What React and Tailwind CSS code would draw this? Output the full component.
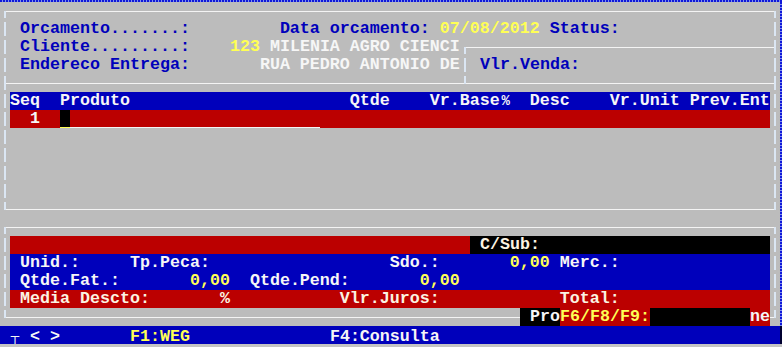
import React from "react";

const LINE_H = "#f4f4f4";
const LINE_V = "#dbe6f3";

function Box({ u, d, l, r }) {
  return (
    <svg width="10" height="18" className="block shrink-0">
      {l && <rect x="0" y="9" width="5" height="1" fill={LINE_H} />}
      {r && <rect x="4" y="9" width="6" height="1" fill={LINE_H} />}
      {u && <rect x="4" y="2" width="2" height="8" fill={LINE_V} />}
      {d && <rect x="4" y="9" width="2" height="7" fill={LINE_V} />}
    </svg>
  );
}

function HLine({ className }) {
  return (
    <div className={`${className} h-[18px] pt-[9px] shrink-0`}>
      <div className="h-px bg-[#f4f4f4]" />
    </div>
  );
}

function Row({ children }) {
  return <div className="flex h-[18px] leading-[18px]">{children}</div>;
}

const B = ({ children }) => <span className="whitespace-pre text-[#0000bb]">{children}</span>;
const Y = ({ children }) => <span className="whitespace-pre text-[#ffff55]">{children}</span>;
const W = ({ children }) => <span className="whitespace-pre text-[#f6f6f6]">{children}</span>;
const C = ({ children }) => <span className="whitespace-pre text-[#fbf3e2]">{children}</span>;

export default function App() {
  return (
    <div className="w-[782px] h-[347px] overflow-hidden bg-[#bcbcbc] font-[family-name:Liberation_Mono,monospace] text-[16.664px] font-bold flex flex-col">
      {/* top dotted strip */}
      <div className="h-[2px] bg-[repeating-linear-gradient(90deg,#1018d8_0px,#1018d8_2px,#8090f0_2px,#8090f0_3px)]" />

      <div className="flex">
        <div className="w-[780px] flex flex-col">
          {/* row 0 */}
          <Row>
            <Box d r />
            <HLine className="w-[760px]" />
            <Box d l />
          </Row>
          {/* row 1 */}
          <Row>
            <Box u d />
            <div className="w-[760px] flex">
              <B>{" Orcamento.......:         Data orcamento: "}</B>
              <Y>07/08/2012</Y>
              <B>{" Status:"}</B>
            </div>
            <Box u d />
          </Row>
          {/* row 2 */}
          <Row>
            <Box u d />
            <div className="w-[450px] flex shrink-0">
              <B>{" Cliente.........:    "}</B>
              <Y>123</Y>
              <W>{" MILENIA AGRO CIENCI"}</W>
            </div>
            <Box d r />
            <HLine className="w-[300px]" />
            <Box u d l />
          </Row>
          {/* row 3 */}
          <Row>
            <Box u d />
            <div className="w-[450px] flex shrink-0">
              <B>{" Endereco Entrega:       "}</B>
              <W>RUA PEDRO ANTONIO DE</W>
            </div>
            <Box u d />
            <div className="w-[300px] flex shrink-0">
              <B>{" Vlr.Venda:"}</B>
            </div>
            <Box u d />
          </Row>
          {/* row 4 */}
          <Row>
            <Box u d r />
            <HLine className="w-[450px]" />
            <Box u l r />
            <HLine className="w-[300px]" />
            <Box u d l />
          </Row>
          {/* row 5 table header */}
          <Row>
            <Box u d />
            <div className="w-[760px] flex bg-[#0000bb]">
              <W>{"Seq  Produto                      Qtde    Vr.Base"}</W>
              <span className="w-[10px] shrink-0 flex justify-center">
                <span className="text-[#f6f6f6] text-[14px] pl-[2px]">%</span>
              </span>
              <W>{"  Desc    Vr.Unit Prev.Ent"}</W>
            </div>
            <Box u d />
          </Row>
          {/* row 6 first item */}
          <Row>
            <Box u d />
            <div className="w-[760px] flex bg-[#bb0000]">
              <div className="w-[50px] shrink-0">
                <W>{"  1"}</W>
              </div>
              <div className="w-[10px] h-[18px] shrink-0 bg-black border-b border-[#ffff55]" />
              <div className="w-[250px] h-[18px] shrink-0 border-b border-[#f4f4f4]" />
            </div>
            <Box u d />
          </Row>
          {/* rows 7-10 */}
          {[0, 1, 2, 3].map((i) => (
            <Row key={i}>
              <Box u d />
              <div className="w-[760px]" />
              <Box u d />
            </Row>
          ))}
          {/* row 11 */}
          <Row>
            <Box u r />
            <HLine className="w-[760px]" />
            <Box u l />
          </Row>
          {/* row 12 */}
          <Row>
            <Box d r />
            <HLine className="w-[760px]" />
            <Box d l />
          </Row>
          {/* row 13 */}
          <Row>
            <Box u d />
            <div className="w-[460px] shrink-0 bg-[#bb0000]" />
            <div className="w-[300px] shrink-0 bg-black flex">
              <C>{" C/Sub:"}</C>
            </div>
            <Box u d />
          </Row>
          {/* row 14 */}
          <Row>
            <Box u d />
            <div className="w-[760px] flex bg-[#0000bb]">
              <W>{" Unid.:     Tp.Peca:                  Sdo.:       "}</W>
              <Y>0,00</Y>
              <W>{" Merc.:"}</W>
            </div>
            <Box u d />
          </Row>
          {/* row 15 */}
          <Row>
            <Box u d />
            <div className="w-[760px] flex bg-[#0000bb]">
              <W>{" Qtde.Fat.:       "}</W>
              <Y>0,00</Y>
              <W>{"  Qtde.Pend:       "}</W>
              <Y>0,00</Y>
            </div>
            <Box u d />
          </Row>
          {/* row 16 */}
          <Row>
            <Box u d />
            <div className="w-[760px] flex bg-[#bb0000]">
              <C>{" Media Descto:       %           Vlr.Juros:            Total:"}</C>
            </div>
            <Box u d />
          </Row>
          {/* row 17 */}
          <Row>
            <Box u r />
            <HLine className="w-[510px]" />
            <div className="w-[40px] shrink-0 bg-black flex">
              <W>{" Pro"}</W>
            </div>
            <div className="w-[90px] shrink-0 bg-[#bb0000] flex">
              <Y>F6/F8/F9:</Y>
            </div>
            <div className="w-[100px] shrink-0 bg-black" />
            <div className="w-[20px] shrink-0 bg-[#bb0000] flex">
              <W>ne</W>
            </div>
            <Box u l />
          </Row>
        </div>
        {/* right dotted stripe */}
        <div className="w-[2px] bg-[repeating-linear-gradient(180deg,#1018d8_0px,#1018d8_2px,#8090f0_2px,#8090f0_3px)]" />
      </div>

      {/* bottom function bar */}
      <div className="flex h-[18px]">
        <div className="w-[780px] bg-[#0000bb] flex leading-[18px] pt-[2px]">
          <div className="w-[10px] shrink-0" />
          <div className="w-[10px] shrink-0 flex items-end justify-center pb-[1px]">
            <span className="text-[#f4f4f4] font-normal text-[14px] leading-[12px]">┬</span>
          </div>
          <div className="w-[10px] shrink-0" />
          <W>{"< >       "}</W>
          <Y>F1:WEG</Y>
          <W>{"              F4:Consulta"}</W>
        </div>
        <div className="w-[2px] bg-[#000030]" />
      </div>
      <div className="h-[3px] bg-[#c4c4c4]" />
    </div>
  );
}
